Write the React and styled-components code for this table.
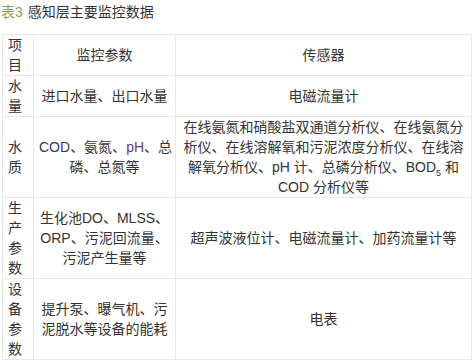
import React from 'react'
import styled, { createGlobalStyle } from 'styled-components'

const GlobalStyle = createGlobalStyle`
  body {
    margin: 0;
    background: #fff;
    font-family: "Liberation Sans", "Noto Sans CJK SC", sans-serif;
    color: #333;
  }
`

const Page = styled.div`
  padding: 0 0 0 2px;
  width: 471px;
`

const Caption = styled.div`
  font-size: 14px;
  line-height: 24px;
  height: 24px;
  margin: 0 0 10px -1px;
  color: #333;
  white-space: nowrap;
`

const Tag = styled.span`
  color: #8aa452;
  margin-right: 5px;
`

const Table = styled.table`
  border-collapse: collapse;
  table-layout: fixed;
  width: 469px;
  font-size: 14px;
  line-height: 20px;
`

const Cell = styled.td`
  border: 1px solid #e8e8e8;
  padding: ${(p) => (p.$side ? '0 2px 0 5px' : '0 5px')};
  text-align: ${(p) => (p.$side ? 'left' : 'center')};
  vertical-align: middle;
  white-space: nowrap;
`

const Hue = styled.span`
  color: ${(p) => p.$c || '#333'};
`

const Side = ({ text }) => (
  <Cell $side>
    {text.split('').map((ch, i) => (
      <React.Fragment key={i}>
        {i > 0 && <br />}
        {ch}
      </React.Fragment>
    ))}
  </Cell>
)

const App = () => (
  <Page>
    <GlobalStyle />
    <Caption>
      <Tag>表3</Tag>感知层主要监控数据
    </Caption>
    <Table>
      <colgroup>
        <col style={{ width: 31 }} />
        <col style={{ width: 142 }} />
        <col style={{ width: 296 }} />
      </colgroup>
      <tbody>
        <tr>
          <Side text="项目" />
          <Cell>监控参数</Cell>
          <Cell>传感器</Cell>
        </tr>
        <tr>
          <Side text="水量" />
          <Cell>进口水量、出口水量</Cell>
          <Cell>电磁流量计</Cell>
        </tr>
        <tr>
          <Side text="水质" />
          <Cell>
            <Hue $c="#3c3550">COD</Hue>、氨氮、<Hue $c="#6a3d7a">pH</Hue>、总
            <br />
            磷、总氮等
          </Cell>
          <Cell>
            在线氨氮和硝酸盐双通道分析仪、在线氨氮分
            <br />
            析仪、在线溶解氧和污泥浓度分析仪、在线溶
            <br />
            解氧分析仪、pH 计、总磷分析仪、BOD<sub style={{ fontSize: 9, lineHeight: 0 }}>5</sub> 和
            <br />
            COD 分析仪等
          </Cell>
        </tr>
        <tr>
          <Side text="生产参数" />
          <Cell>
            生化池DO、MLSS、
            <br />
            ORP、污泥回流量、
            <br />
            污泥产生量等
          </Cell>
          <Cell>超声波液位计、电磁流量计、加药流量计等</Cell>
        </tr>
        <tr>
          <Side text="设备参数" />
          <Cell>
            提升泵、曝气机、污
            <br />
            泥脱水等设备的能耗
          </Cell>
          <Cell>电表</Cell>
        </tr>
      </tbody>
    </Table>
  </Page>
)

export default App
